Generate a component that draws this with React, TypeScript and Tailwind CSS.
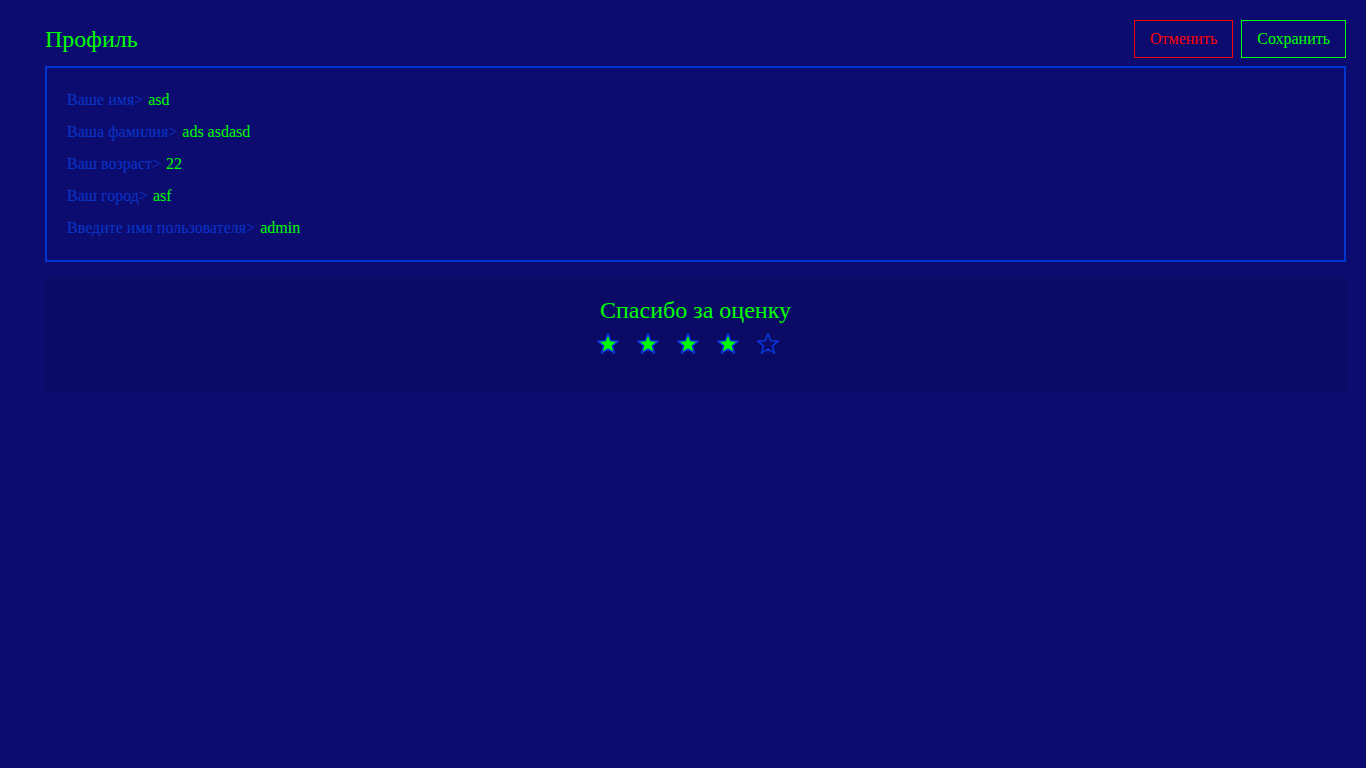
import React from "react";

const fields = [
  { label: "Ваше имя>", value: "asd" },
  { label: "Ваша фамилия>", value: "ads asdasd" },
  { label: "Ваш возраст>", value: "22" },
  { label: "Ваш город>", value: "asf" },
  { label: "Введите имя пользователя>", value: "admin" },
];

function Star({ filled }: { filled: boolean }) {
  return (
    <svg width="24" height="24" viewBox="0 0 24 24" className="mr-4">
      <path
        d="M12 1.8L14.7 8.8L22.3 9.1L16.4 13.9L18.4 21.2L12 17.1L5.6 21.2L7.6 13.9L1.7 9.1L9.3 8.8Z"
        fill={filled ? "#00ff00" : "none"}
        stroke="#0a35d8"
        strokeWidth={1.6}
        strokeLinejoin="round"
      />
    </svg>
  );
}

export default function App() {
  return (
    <div
      className="min-h-screen w-full bg-[#0c0c70] pl-[45px] pr-[20px] pt-[20px]"
      style={{ fontFamily: '"Liberation Serif", "Times New Roman", serif' }}
    >
      {/* Header */}
      <div className="flex items-center justify-between h-[38px]">
        <h1 className="text-[24px] text-[#00ff00] leading-none">Профиль</h1>
        <div className="flex gap-2">
          <button className="h-[38px] px-[15px] border border-[#ff0000] text-[#ff0000] text-[16px]">
            Отменить
          </button>
          <button className="h-[38px] px-[15px] border border-[#00ff00] text-[#00ff00] text-[16px]">
            Сохранить
          </button>
        </div>
      </div>

      {/* Profile fields */}
      <div className="mt-2 border-2 border-[#0035d0] px-5 py-5 flex flex-col gap-2">
        {fields.map((f) => (
          <p key={f.label} className="text-[16px] leading-6">
            <span className="text-[#0a35c8]">{f.label}</span>{" "}
            <span className="text-[#00ff00] ml-px">{f.value}</span>
          </p>
        ))}
      </div>

      {/* Rating */}
      <div className="mt-4 h-[115px] bg-[#0b0b66] flex flex-col items-center pt-[16px]">
        <h2 className="text-[24px] leading-8 text-[#00ff00]">Спасибо за оценку</h2>
        <div className="flex mt-[6px]">
          {[1, 2, 3, 4, 5].map((n) => (
            <Star key={n} filled={n <= 4} />
          ))}
        </div>
      </div>
    </div>
  );
}
